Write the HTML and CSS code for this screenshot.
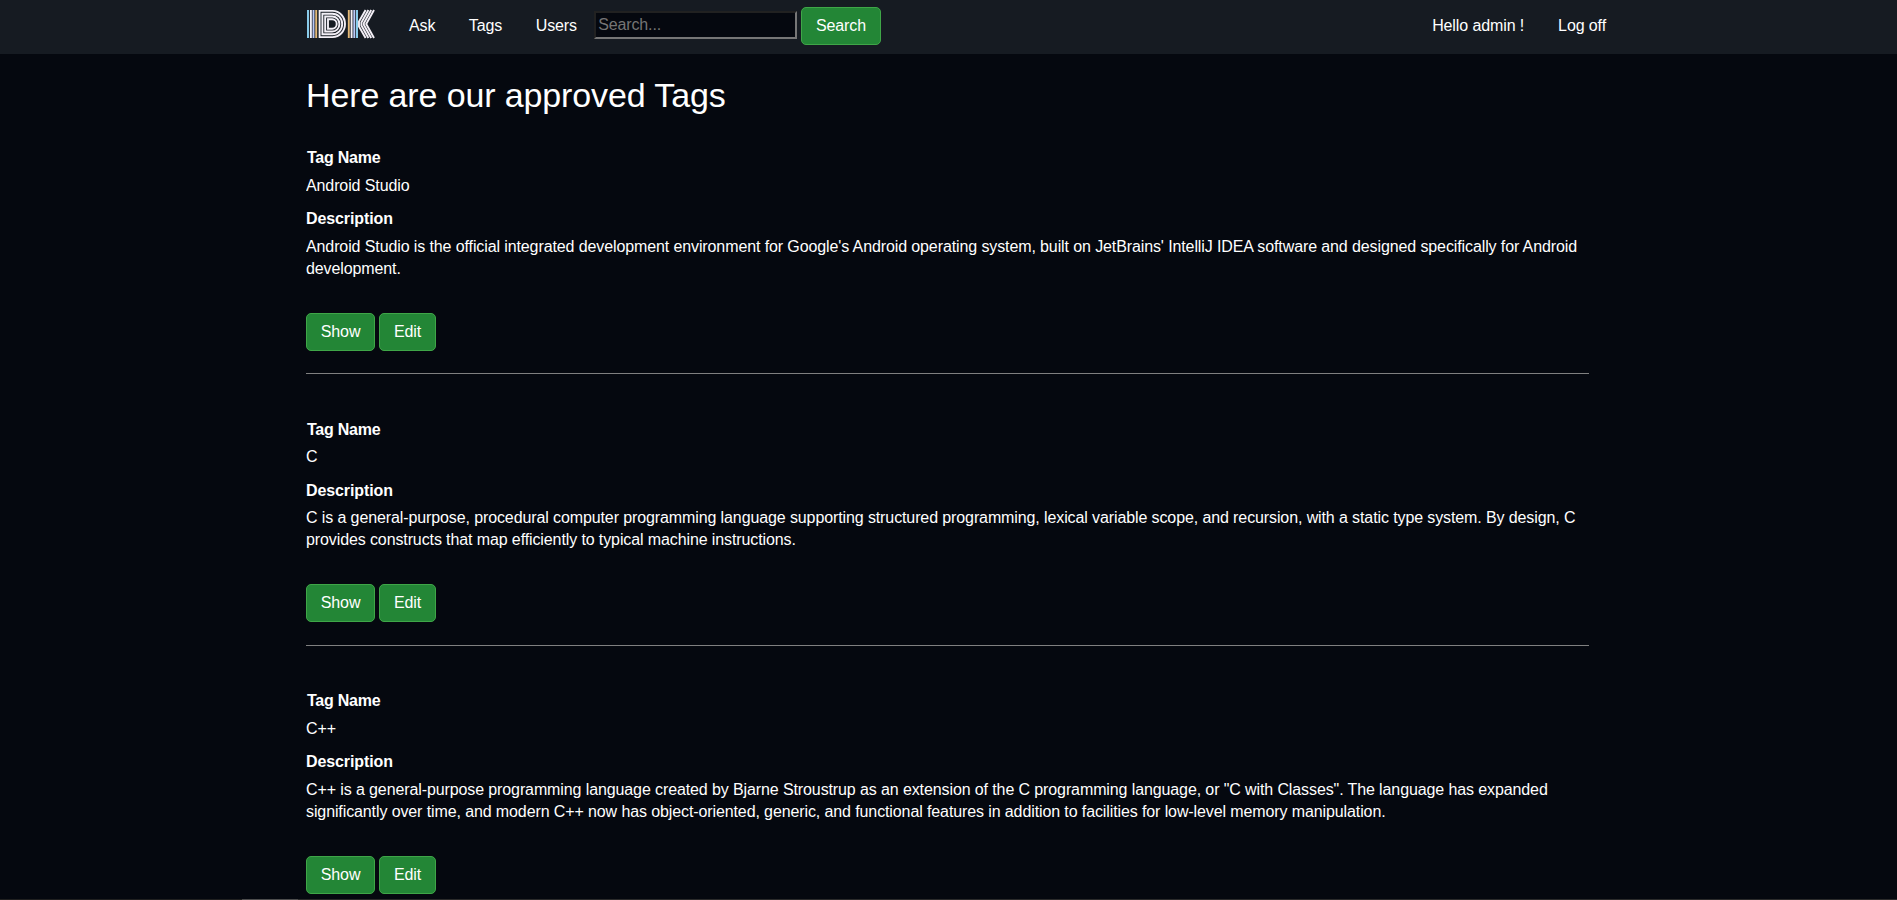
FILE: index.html
```html
<!DOCTYPE html>
<html lang="en">
<head>
<meta charset="utf-8">
<title>Tags</title>
<link rel="stylesheet" href="styles.css">
</head>
<body>
<header class="header">
  <nav class="nav">
    <a class="logo" href="#"><svg width="70" height="30" viewBox="0 0 70 30" fill="none" stroke="#f3eff6" stroke-width="1.9">
      <path stroke="#8fd4f5" d="M2 1v28"/><path d="M4.9 1v28"/><path stroke="#b9c8f7" d="M7.5 1v28"/><path stroke="#e3b877" d="M10.2 1v28"/>
      <path d="M13.6 1.9h13a12.4 13.1 0 0 1 0 26.2h-13zM16.4 4.7h10a9.8 10.3 0 0 1 0 20.6h-10zM19.2 7.5h7a7.2 7.5 0 0 1 0 15h-7zM22 10.3h4.2a4.5 4.7 0 0 1 0 9.4h-4.2z"/>
      <path stroke="#e3b877" d="M42.8 1v28"/><path d="M45.6 1v28"/><path stroke="#b9c8f7" d="M48.3 1v28"/><path stroke="#8fd4f5" d="M51 1v28"/>
      <path d="M59.6 1L53 12.5v5L59.6 29M62.4 1L55.4 13.5v3L62.4 29M65.2 1L57.8 14.3v1.4L65.2 29M68 1L60.2 15L68 29"/>
    </svg></a>
    <a class="link" href="#">Ask</a>
    <a class="link" href="#">Tags</a>
    <a class="link" href="#">Users</a>
    <form class="search"><input class="field" type="text" placeholder="Search..."><button class="btn" type="button">Search</button></form>
    <div class="account"><a class="link" href="#">Hello admin !</a><a class="link" href="#">Log off</a></div>
  </nav>
</header>
<main class="content">
  <h1 class="title">Here are our approved Tags</h1>
  <section class="tag">
    <h2 class="label name">Tag Name</h2>
    <p class="text">Android Studio</p>
    <h2 class="label">Description</h2>
    <p class="text">Android Studio is the official integrated development environment for Google's Android operating system, built on JetBrains' IntelliJ IDEA software and designed specifically for Android development.</p>
    <div class="actions"><a class="btn" href="#">Show</a><a class="btn" href="#">Edit</a></div>
  </section>
  <section class="tag">
    <h2 class="label name">Tag Name</h2>
    <p class="text">C</p>
    <h2 class="label">Description</h2>
    <p class="text">C is a general-purpose, procedural computer programming language supporting structured programming, lexical variable scope, and recursion, with a static type system. By design, C provides constructs that map efficiently to typical machine instructions.</p>
    <div class="actions"><a class="btn" href="#">Show</a><a class="btn" href="#">Edit</a></div>
  </section>
  <section class="tag">
    <h2 class="label name">Tag Name</h2>
    <p class="text">C++</p>
    <h2 class="label">Description</h2>
    <p class="text">C++ is a general-purpose programming language created by Bjarne Stroustrup as an extension of the C programming language, or "C with Classes". The language has expanded significantly over time, and modern C++ now has object-oriented, generic, and functional features in addition to facilities for low-level memory manipulation.</p>
    <div class="actions"><a class="btn" href="#">Show</a><a class="btn" href="#">Edit</a></div>
  </section>
</main>
<div class="edge"></div>
</body>
</html>
```
FILE: styles.css
```css
* { box-sizing: border-box; }
html, body { height: 100%; }
body {
  margin: 0;
  overflow: hidden;
  background: #05080f;
  color: #fff;
  font: 16px/22.4px "Liberation Sans", Arial, sans-serif;
  letter-spacing: -0.108px;
}
a { color: inherit; text-decoration: none; }
.header { height: 54px; background: #161b22; }
.nav { display: flex; align-items: center; height: 52px; margin: 0 291px 0 306px; }
.logo { display: block; width: 70px; height: 30px; margin-right: 33px; margin-top: -4px; }
.link { margin-right: 33.5px; padding-top: 1px; }
.search { display: flex; align-items: center; gap: 4px; margin-left: -16.3px; }
.field {
  width: 203px;
  height: 28px;
  margin: 0 0 2px;
  padding: 1px 2px;
  border: 2px inset #767676;
  background: #05080f;
  color: #fff;
  font: 16px "Liberation Sans", Arial, sans-serif;
  letter-spacing: -0.127px;
}
.field::placeholder { color: #757575; }
.btn {
  display: inline-flex;
  align-items: center;
  height: 38px;
  padding: 0 13.8px;
  border: 1px solid #3fa648;
  border-radius: 5px;
  background: #238636;
  color: #fff;
  font: 16px "Liberation Sans", Arial, sans-serif;
  letter-spacing: -0.127px;
}
.account { display: flex; margin-left: auto; }
.account .link:first-child { margin-right: 34px; }
.account .link:last-child { margin-right: 0; }
.content { width: 1283px; height: 846px; overflow: hidden; margin-left: 306px; padding-top: 20px; }
.title { margin: 0 0 30px; font-size: 34px; line-height: 42px; font-weight: 400; letter-spacing: -0.12px; }
.tag { height: 228px; margin-bottom: 43.5px; padding-top: 1.3px; border-bottom: 1px solid #808080; }
.tag:last-child { margin-bottom: 0; }
.label { margin: 0 0 5px; font-size: 16px; line-height: 22.4px; font-weight: 700; }
.name { padding-left: 1px; letter-spacing: -0.25px; }
.text { margin: 0 0 11px; }
.actions { display: flex; gap: 4px; margin-top: 32.6px; }
.edge {
  position: fixed;
  left: 0;
  right: 0;
  bottom: 0;
  height: 1px;
  background: linear-gradient(90deg, #202020 242px, #4d4d4d 242px, #4d4d4d 298px, #2b2b2b 298px);
}
```
